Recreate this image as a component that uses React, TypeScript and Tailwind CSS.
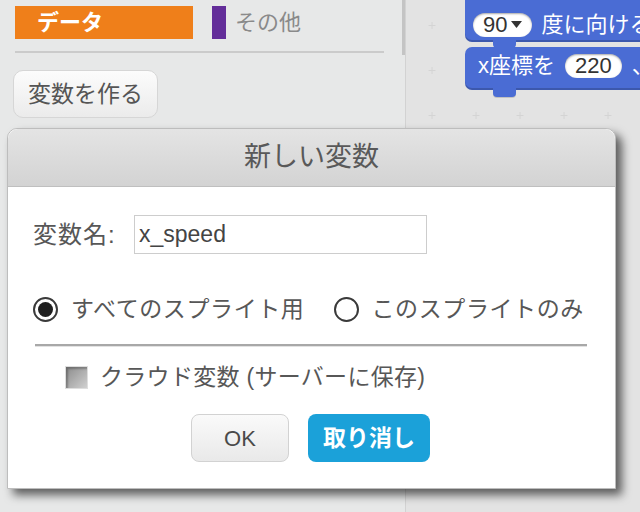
import React from 'react'

const textGray = 'text-[#575757]'

function RadioOn() {
  return (
    <div className="w-[25px] h-[25px] rounded-full border-2 border-[#3a3a3a] bg-white flex items-center justify-center">
      <div className="w-[15px] h-[15px] rounded-full bg-[#1f1f1f]" />
    </div>
  )
}

function RadioOff() {
  return <div className="w-[25px] h-[25px] rounded-full border-2 border-[#3a3a3a] bg-white" />
}

function Pill({ children }: { children: React.ReactNode }) {
  return (
    <div className="h-[24px] rounded-full bg-white flex items-center px-[10px] text-[22px] text-[#333] shadow-[inset_0_1px_2px_rgba(0,0,0,0.35)]">
      {children}
    </div>
  )
}

export default function App() {
  return (
    <div className="relative w-[640px] h-[512px] overflow-hidden flex font-['Liberation_Sans','Noto_Sans_CJK_JP',sans-serif]">
      {/* block palette */}
      <div className="relative w-[406px] shrink-0 bg-[#e7e8e8] border-r border-[#d2d2d2] pl-[15px] pt-[6px]">
        <div className="flex items-center">
          <div className="w-[178px] h-[33px] bg-[#ef7f1a] flex items-center pl-[22px] text-white text-[22px] font-bold">
            データ
          </div>
          <div className="ml-[19px] w-[14px] h-[33px] bg-[#632d99]" />
          <span className="ml-[9px] text-[22px] text-[#8a8a8a]">その他</span>
        </div>
        <div className="mt-[12px] w-[369px] h-[2px] bg-[#cbcbcb]" />
        <button className="mt-[17px] -ml-[2px] w-[145px] h-[48px] rounded-[10px] border border-[#d6d6d6] bg-linear-to-b from-[#fcfcfc] to-[#ebebeb] text-[23px] text-[#555] flex items-center justify-center">
          変数を作る
        </button>
        <div className="absolute right-[0px] top-0 w-[3px] h-[55px] bg-[#c4c4c4]" />
      </div>

      {/* script area */}
      <div className="relative flex-1 bg-[#e3e3e3]">
        <svg className="absolute inset-0" width="234" height="512">
          <defs>
            <pattern id="plus" x="22" y="21" width="44" height="45" patternUnits="userSpaceOnUse">
              <path d="M4 1v7M0.5 4.5h7" stroke="#d4d4d4" strokeWidth="1" />
            </pattern>
          </defs>
          <rect width="234" height="512" fill="url(#plus)" />
        </svg>

        {/* purple notch from block above */}
        <div className="absolute left-[89px] top-[-4px] w-[22px] h-[9px] rounded-b-[4px] bg-[#7e49c4]" />

        {/* block 1 */}
        <div className="absolute left-[59px] top-[-20px] w-[260px] h-[62px] rounded-[7px] bg-[#4a6cd4] shadow-[inset_0_-2px_0_rgba(0,0,0,0.18)]" />
        <div className="absolute left-[87px] top-[40px] w-[23px] h-[8px] rounded-b-[4px] bg-[#4a6cd4] z-10" />
        <div className="absolute left-[67px] top-[13px] flex items-center gap-[9px] text-white text-[22px] whitespace-nowrap">
          <Pill>
            <span className="leading-none">90</span>
            <svg width="11" height="8" viewBox="0 0 11 8" className="ml-[4px]">
              <path d="M0 0h11L5.5 7z" fill="#333" />
            </svg>
          </Pill>
          <span className="leading-none">度に向ける</span>
        </div>

        {/* block 2 */}
        <div className="absolute left-[59px] top-[47px] w-[260px] h-[43px] rounded-[7px] bg-[#4a6cd4] shadow-[inset_0_-2px_0_rgba(0,0,0,0.18)]" />
        <div className="absolute left-[87px] top-[88px] w-[23px] h-[9px] rounded-b-[4px] bg-[#4a6cd4] shadow-[0_1px_0_rgba(0,0,0,0.15)]" />
        <div className="absolute left-[72px] top-[54px] flex items-center gap-[10px] text-white text-[22px] whitespace-nowrap">
          <span className="leading-none">x座標を</span>
          <Pill>
            <span className="leading-none">220</span>
          </Pill>
          <span className="leading-none">、y座標を</span>
        </div>
      </div>

      {/* new variable dialog */}
      <div className="absolute left-[7px] top-[128px] w-[609px] h-[361px] flex flex-col bg-white border border-[#bdbdbd] rounded-t-[10px] shadow-[6px_6px_10px_rgba(0,0,0,0.6)]">
        <div className="h-[58px] shrink-0 rounded-t-[10px] border-b border-[#bfbfbf] bg-linear-to-b from-[#e4e4e4] to-[#d3d3d3] flex items-center justify-center text-[27px] text-[#595959]">
          新しい変数
        </div>

        <div className={`flex items-center mt-[28px] pl-[25px] ${textGray}`}>
          <span className="w-[101px] text-[24px] tracking-[1px]">変数名:</span>
          <div className="w-[293px] h-[39px] border border-[#cdcdcd] flex items-center pl-[4px] text-[23px] text-[#444]">
            x_speed
          </div>
        </div>

        <div className={`flex items-center mt-[43px] pl-[25px] text-[23px] tracking-[0.6px] ${textGray}`}>
          <RadioOn />
          <span className="ml-[13px] leading-none">すべてのスプライト用</span>
          <div className="ml-[30px]">
            <RadioOff />
          </div>
          <span className="ml-[12px] leading-none">このスプライトのみ</span>
        </div>

        <div className="mt-[22px] ml-[27px] w-[552px] h-[2px] bg-[#a8a8a8] border-b border-[#e2e2e2] box-content" />

        <div className={`flex items-center mt-[19px] pl-[57px] ${textGray}`}>
          <div className="w-[23px] h-[23px] border border-[#dedede] bg-linear-to-br from-[#8c8c8c] to-[#d0d0d0] shadow-[inset_2px_2px_2px_rgba(0,0,0,0.25)]" />
          <span className="ml-[12px] text-[23px] tracking-[0.3px] leading-none">クラウド変数 (サーバーに保存)</span>
        </div>

        <div className="flex justify-center gap-[19px] mt-[25px] pr-[2px]">
          <button className="w-[98px] h-[48px] rounded-[8px] border border-[#d2d2d2] bg-linear-to-b from-[#fafafa] to-[#e9e9e9] text-[22px] text-[#4a4a4a]">
            OK
          </button>
          <button className="w-[122px] h-[48px] rounded-[8px] bg-[#1ba1d9] text-[23px] font-bold text-white">
            取り消し
          </button>
        </div>
      </div>
    </div>
  )
}
